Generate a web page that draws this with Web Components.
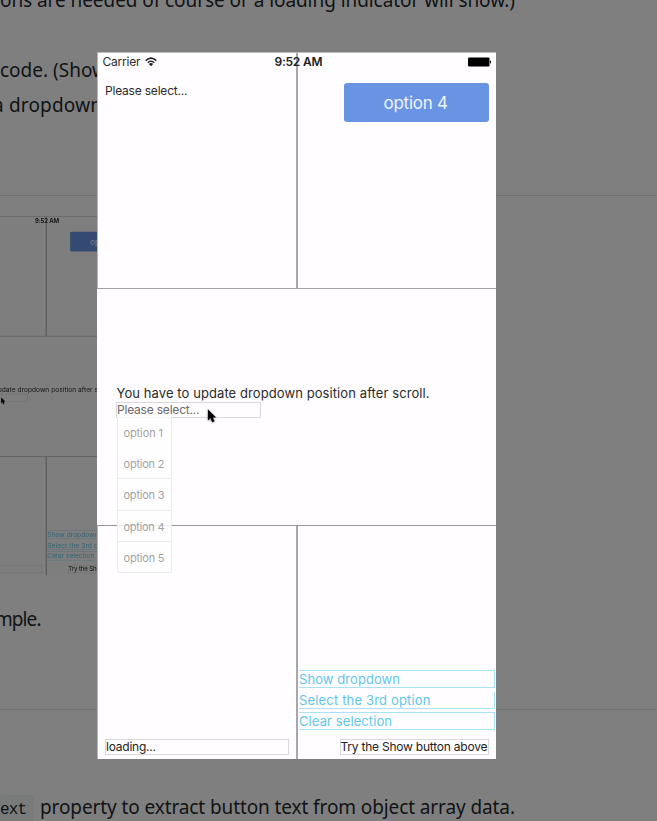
<!DOCTYPE html>
<html lang="en"><head><meta charset="utf-8"><title>Dropdown demo</title>
<style>html,body{margin:0;height:821px;overflow:hidden;background:#fff}body{position:relative}</style></head>
<body><demo-page></demo-page><light-box><phone-screen></phone-screen></light-box>
<script>
// Text run whose tracking is adjusted to fill a given width.
class FitText extends HTMLElement{
 constructor(){super();this.attachShadow({mode:'open'}).innerHTML='<style>:host{display:block;white-space:pre}span{display:inline-block}</style><span><slot></slot></span>';}
 connectedCallback(){
  const s=this.shadowRoot.querySelector('span'),w=+this.getAttribute('w'),t=this.textContent;
  if(!w)return;
  const n=parseFloat(getComputedStyle(s).width);
  if(n)s.style.letterSpacing=((w-n)/(t.length-1||1))+'px';
 }
}
customElements.define('fit-text',FitText);

class WifiIcon extends HTMLElement{
 constructor(){super();this.attachShadow({mode:'open'}).innerHTML=`<style>:host{display:block;width:12px;height:10px}svg{display:block}</style>
 <svg width="12" height="10" viewBox="0 0 12 10" fill="none" stroke="#222" stroke-width="1.5"><path d="M.7 3.6Q6-1.4 11.3 3.6M2.7 5.7Q6 2.7 9.3 5.7"/><path d="M3.9 7Q6 5.2 8.1 7L6 9.3Z" fill="#222" stroke="none"/></svg>`;}
}
customElements.define('wifi-icon',WifiIcon);

class BatteryIcon extends HTMLElement{
 constructor(){super();this.attachShadow({mode:'open'}).innerHTML=`<style>:host{display:block;width:24px;height:10px}svg{display:block}</style>
 <svg width="24" height="10"><rect x="0" y=".4" width="21.5" height="9" rx="1.2" fill="#000"/><path d="M22 3Q24.4 4.9 22 6.8Z" fill="#111"/></svg>`;}
}
customElements.define('battery-icon',BatteryIcon);

class MouseArrow extends HTMLElement{
 constructor(){super();this.attachShadow({mode:'open'}).innerHTML=`<style>:host{display:block}svg{display:block;filter:drop-shadow(0 1px 1px #0005)}</style>
 <svg width="12" height="16" viewBox="0 0 12 16"><path d="M1 .5V11.2L3.6 9L5.2 13.1L7.4 12.2L5.7 8.3H8.8Z" fill="#000" stroke="#000" stroke-width=".3"/></svg>`;}
}
customElements.define('mouse-arrow',MouseArrow);

class DropList extends HTMLElement{
 constructor(){super();this.attachShadow({mode:'open'}).innerHTML=`<style>
 :host{display:block;box-sizing:border-box;width:55px;height:156px;border:1px solid #ececee;border-top:0;border-radius:0 0 2px 2px;background:rgba(255,254,255,.82);color:#a2a2a2;font-size:11px}
 div{box-sizing:border-box;height:31.2px;line-height:32px;padding-left:5.5px;border-bottom:1px solid #ececee}
 div:first-of-type,div:last-of-type{border-bottom-color:transparent}</style>`+
 [1,2,3,4,5].map(i=>`<div><fit-text w="${i==1?39.5:41}">option ${i}</fit-text></div>`).join('');}
}
customElements.define('drop-list',DropList);

class LinkButton extends HTMLElement{
 constructor(){super();this.attachShadow({mode:'open'}).innerHTML=`<style>
 :host{display:block;box-sizing:border-box;height:18px;line-height:16px;border:1px solid #a9e2f4;border-left:0;color:#5fc8e9;font-size:13px}
 :host([open-top]){border-top-color:transparent}</style><slot></slot>`;}
}
customElements.define('link-button',LinkButton);

class PhoneScreen extends HTMLElement{
 constructor(){super();this.attachShadow({mode:'open'}).innerHTML=`<style>
 :host{display:grid;position:relative;grid-template-rows:237px 237px 233px;width:399px;height:707px;background:#fffdff;font-family:Inter,sans-serif;color:#2b2b2b;font-size:12px}
 .row{display:grid;grid-template-columns:200.5px 1fr;box-sizing:border-box}
 .top{border-top:1px solid #bbb;border-bottom:1.5px solid #a2a2a2;margin-right:.5px}
 .cell{box-sizing:border-box;min-width:0}
 .left{border-left:1px solid #b8b8b8;border-right:2px solid #a8a8a8}
 .mid{border-bottom:1px solid #989898;padding:97px 0 0 19px}
 .mid h2{margin:0;font-weight:400;font-size:13px;line-height:15px;height:16px;padding-left:.5px}
 .field{box-sizing:border-box;border:1px solid #d9d9d9;line-height:14px;height:16px;padding-left:0}
 .f1{width:145px;color:#6b6b6b}
 .status{position:absolute;left:5.5px;right:4.5px;top:3px;height:14px;line-height:14px;display:grid;grid-template-columns:42.5px 129.5px 1fr 24px;align-items:center}
 .status b{font-weight:600;color:#222}
 .pls{padding:30px 0 0 7px;line-height:16px}
 .btn{margin:30px 0 0 46px;width:145px;height:39px;box-sizing:border-box;border-radius:3px;background:#6994e4;color:#eef3ff;font-size:17px;line-height:40px;padding-left:40px}
 .bot{display:flex;flex-direction:column;justify-content:flex-end;padding-bottom:4.5px}
 .bl{padding-left:7px}.bl .field{width:184px;color:#222}
 .br{padding-right:1.5px}.links{display:grid;gap:3px;margin-bottom:9px;padding-left:1.5px}
 .br .field{width:149px;margin-left:auto;margin-right:6px;color:#222}
 drop-list{position:absolute;left:20px;top:365px}
 mouse-arrow{position:absolute;left:110px;top:357px}
 :host([thumb]) .off{visibility:hidden}
 </style>
 <div class="row top"><div class="cell left pls"><div class="off"><fit-text w="82.5">Please select...</fit-text></div></div><div class="cell"><div class="btn"><fit-text w="64.5">option 4</fit-text></div></div></div>
 <div class="mid"><h2><fit-text w="313">You have to update dropdown position after scroll.</fit-text></h2><div class="field f1"><div class="off"><fit-text w="82.5">Please select...</fit-text></div></div></div>
 <div class="row"><div class="cell left bot bl"><div class="field"><div class="off"><fit-text w="50">loading...</fit-text></div></div></div>
 <div class="cell bot br"><div class="links"><link-button><fit-text w="101">Show dropdown</fit-text></link-button><link-button open-top><fit-text w="131.5">Select the 3rd option</fit-text></link-button><link-button><fit-text w="93">Clear selection</fit-text></link-button></div>
 <div class="field"><fit-text w="147">Try the Show button above</fit-text></div></div></div>
 <div class="status"><div class="off"><fit-text w="38">Carrier</fit-text></div><wifi-icon></wifi-icon><b><fit-text w="48">9:52 AM</fit-text></b><battery-icon></battery-icon></div>
 <drop-list class="off"></drop-list><mouse-arrow></mouse-arrow>`;}
}
customElements.define('phone-screen',PhoneScreen);

class DemoPage extends HTMLElement{
 constructor(){super();this.attachShadow({mode:'open'}).innerHTML=`<style>
 :host{display:flex;flex-direction:column;height:821px;overflow:hidden;background:#fff;color:#24292e;font:19px/35px "Noto Sans","Open Sans",sans-serif}
 p{margin:0;height:35px;flex:none}
 hr{margin:0;border:0;height:1px;background:#e2e4e6;flex:none;width:100%}
 .shot{height:358px;width:202px;margin:20px 0 28px -54.6px;flex:none}
 .shot phone-screen{transform:scale(.5064,.508);transform-origin:0 0}
 .last{display:flex;align-items:center;gap:6px}
 code{font:16px/30px "Liberation Mono",monospace;background:#f3f6f7;border-radius:3px;height:28px;width:34px;margin-top:2px}
 </style>
 <p style="margin-top:-17px"><fit-text w="515">ons are needed of course or a loading indicator will show.)</fit-text></p>
 <p style="margin-top:35px"><fit-text w="107">code. (Show</fit-text></p>
 <p style="margin-left:-7px"><fit-text w="109">a dropdown</fit-text></p>
 <hr style="margin-top:72px">
 <div class="shot"><phone-screen thumb></phone-screen></div>
 <p style="margin-left:-5px"><fit-text w="46.5">mple.</fit-text></p>
 <hr style="margin-top:72px">
 <p class="last" style="margin-top:80px"><code><fit-text w="27">ext</fit-text></code><fit-text w="475">property to extract button text from object array data.</fit-text></p>`;}
}
customElements.define('demo-page',DemoPage);

class LightBox extends HTMLElement{
 constructor(){super();this.attachShadow({mode:'open'}).innerHTML=`<style>:host{position:absolute;inset:0;display:flex;align-items:flex-start;padding:52px 0 0 97px;background:rgba(0,0,0,.5)}</style><slot></slot>`;}
}
customElements.define('light-box',LightBox);
</script></body></html>
